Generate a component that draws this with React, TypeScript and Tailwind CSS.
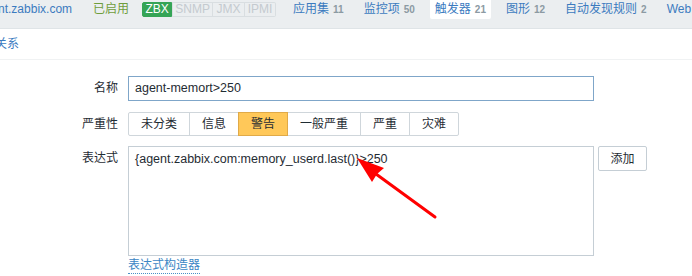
import type { ReactNode } from "react";

const font = "font-['Liberation_Sans','Noto_Sans_CJK_SC',sans-serif]";

const tabs = [
  { label: "应用集", count: "11" },
  { label: "监控项", count: "50" },
  { label: "触发器", count: "21", active: true },
  { label: "图形", count: "12" },
  { label: "自动发现规则", count: "2" },
  { label: "Web" },
];

const severities = ["未分类", "信息", "警告", "一般严重", "严重", "灾难"];

function Row({ label, children }: { label: string; children: ReactNode }) {
  return (
    <div className="flex items-start">
      <div className="w-[118px] shrink-0 pr-0 text-right leading-[24px] text-[#1f2c33]">
        {label}
      </div>
      <div className="ml-[10px] min-w-0 flex-1">{children}</div>
    </div>
  );
}

export default function App() {
  return (
    <div
      className={`relative h-[276px] w-[692px] overflow-hidden bg-white text-[12px] ${font}`}
    >
      {/* host header + tabs */}
      <div className="flex h-[29px] items-start overflow-hidden whitespace-nowrap border-b border-[#dfe4e7] bg-[#ebeef0]">
        <span className="ml-[-22px] mt-[2px] leading-[14px] text-[#3b7bbf]">
          agent.zabbix.com
        </span>
        <span className="ml-[21px] mt-[2px] leading-[14px] text-[#6f9d3c]">
          已启用
        </span>
        <div className="ml-[13px] mt-[2px] flex h-[15px] text-[12px] leading-[13px]">
          <span className="w-[30px] rounded-l-[2px] border border-[#35a456] bg-[#35a456] text-center text-white">
            ZBX
          </span>
          <span className="w-[41px] border border-[#d9dee1] text-center text-[#c4cacf]">
            SNMP
          </span>
          <span className="w-[32px] border border-l-0 border-[#d9dee1] text-center text-[#c4cacf]">
            JMX
          </span>
          <span className="w-[31px] rounded-r-[2px] border border-l-0 border-[#d9dee1] text-center text-[#c4cacf]">
            IPMI
          </span>
        </div>
        <div className="ml-[12px] flex items-start">
          {tabs.map((tab) => (
            <div
              key={tab.label}
              className={`mr-[10px] flex h-[19px] items-start px-[5px] pt-[2px] leading-[14px] ${
                tab.active ? "rounded-b-[2px] bg-white" : ""
              }`}
            >
              <span className="text-[#3b7bbf]">{tab.label}</span>
              {tab.count && (
                <span className="ml-[4px] text-[10px] font-bold leading-[15px] text-[#8c9aa3]">
                  {tab.count}
                </span>
              )}
            </div>
          ))}
        </div>
      </div>

      {/* sub tabs */}
      <div className="flex h-[31px] items-start whitespace-nowrap border-b border-[#f0f2f3]">
        <span className="ml-[-29px] mt-[7px] leading-[16px] text-[#3b7bbf]">
          依赖关系
        </span>
      </div>

      {/* form */}
      <div className="flex flex-col pt-[16px] text-[#1f2c33]">
        <Row label="名称">
          <div className="flex h-[25px] w-[466px] items-center border border-[#7fa6c9] px-[6px] text-[12.5px]">
            agent-memort&gt;250
          </div>
        </Row>

        <div className="mt-[11px]">
          <Row label="严重性">
            <div className="flex h-[24px]">
              {severities.map((s, i) => (
                <div
                  key={s}
                  className={`flex items-center border px-[12px] ${
                    i === 0 ? "rounded-l-[2px]" : "-ml-px"
                  } ${i === severities.length - 1 ? "rounded-r-[2px]" : ""} ${
                    s === "警告"
                      ? "relative border-[#e0aa48] bg-[#ffc859]"
                      : "border-[#cfd6db] bg-white"
                  }`}
                >
                  {s}
                </div>
              ))}
            </div>
          </Row>
        </div>

        <div className="mt-[10px]">
          <Row label="表达式">
            <div className="flex items-start">
              <div className="h-[110px] w-[466px] border border-[#c5ced5] px-[6px] pt-[5px] text-[12.5px] leading-[15px]">
                {"{agent.zabbix.com:memory_userd.last()}>250"}
              </div>
              <button
                type="button"
                className="ml-[4px] h-[25px] w-[49px] rounded-[2px] border border-[#c5ced5] bg-white text-[12px] text-[#1f2c33]"
              >
                添加
              </button>
            </div>
            <span className="mt-[1px] inline-block border-b border-dotted border-[#4a90c7] leading-[16px] text-[#3b86c4]">
              表达式构造器
            </span>
          </Row>
        </div>
      </div>

      {/* annotation arrow */}
      <svg
        className="pointer-events-none absolute left-0 top-0"
        width="692"
        height="276"
        viewBox="0 0 692 276"
      >
        <line
          x1="376"
          y1="174"
          x2="435"
          y2="217"
          stroke="#ff0000"
          strokeWidth="3"
          strokeLinecap="round"
        />
        <polygon
          points="357,158 384,168 377,174 372,182"
          fill="#ff0000"
        />
      </svg>
    </div>
  );
}
